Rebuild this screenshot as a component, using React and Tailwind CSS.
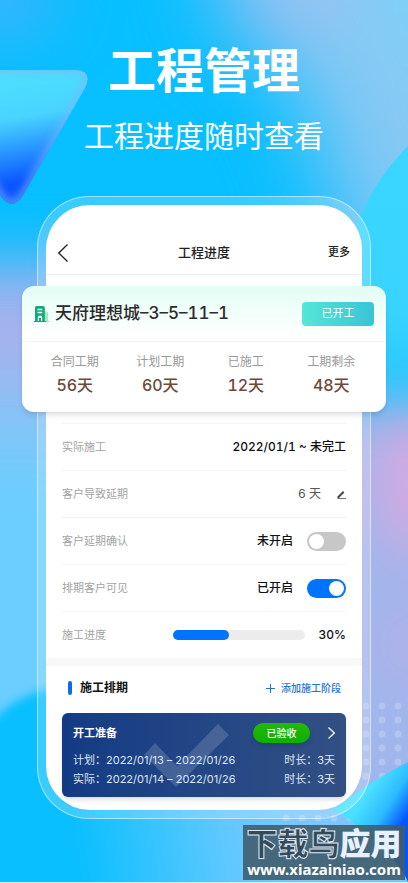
import { useState } from "react";

const stats = [
  { label: "合同工期", value: "56天" },
  { label: "计划工期", value: "60天" },
  { label: "已施工", value: "12天" },
  { label: "工期剩余", value: "48天" },
];

const stages = [
  {
    name: "开工准备",
    status: "已验收",
    dates: [
      { label: "计划：", range: "2022/01/13 – 2022/01/26", days: "时长：3天" },
      { label: "实际：", range: "2022/01/14 – 2022/01/26", days: "时长：3天" },
    ],
  },
];

// dot grid behind the phone, bottom right
const dots = [];
for (let row = 0; row < 9; row++) {
  for (let col = 0; col < 8; col++) {
    dots.push({ x: 286 + col * 16, y: 706 + row * 14 });
  }
}

function Background() {
  return (
    <svg
      className="absolute inset-0 h-full w-full"
      viewBox="0 0 408 883"
      preserveAspectRatio="xMidYMid slice"
      aria-hidden="true"
    >
      <defs>
        <filter id="blur40" x="-50%" y="-50%" width="200%" height="200%" colorInterpolationFilters="sRGB">
          <feGaussianBlur stdDeviation="42" />
        </filter>
        <filter id="blur30" x="-50%" y="-50%" width="200%" height="200%" colorInterpolationFilters="sRGB">
          <feGaussianBlur stdDeviation="30" />
        </filter>
        <filter id="blur3" x="-20%" y="-20%" width="140%" height="140%" colorInterpolationFilters="sRGB">
          <feGaussianBlur stdDeviation="4" />
        </filter>
        <linearGradient id="orb" x1="0" y1="0" x2="0" y2="1">
          <stop offset="0" stopColor="#3ad6ff" />
          <stop offset="0.6" stopColor="#38d4ff" />
          <stop offset="1" stopColor="#40d9ff" stopOpacity="0" />
        </linearGradient>
        <linearGradient id="tri" gradientUnits="userSpaceOnUse" x1="20" y1="70" x2="40" y2="185">
          <stop offset="0" stopColor="#4be2ff" />
          <stop offset="0.4" stopColor="#48d4ff" />
          <stop offset="0.7" stopColor="#2690ff" />
          <stop offset="0.95" stopColor="#0a55ff" />
        </linearGradient>
        <linearGradient id="ground" gradientUnits="userSpaceOnUse" x1="0" y1="850" x2="300" y2="800">
          <stop offset="0.25" stopColor="#0abfff" />
          <stop offset="0.75" stopColor="#62c8ff" />
          <stop offset="1" stopColor="#7cc6fa" />
        </linearGradient>
        <linearGradient id="leaf" gradientUnits="userSpaceOnUse" x1="372" y1="785" x2="418" y2="815">
          <stop offset="0" stopColor="#4ae0ff" />
          <stop offset="0.45" stopColor="#2cbcff" />
          <stop offset="0.85" stopColor="#0656ff" />
        </linearGradient>
        <clipPath id="triClip">
          <path d="M-60 70H76Q93 71 85 88L22 197Q12 211 1 197L-60 90Z" />
        </clipPath>
      </defs>
      <rect width="408" height="883" fill="#08bfff" />
      <g filter="url(#blur40)">
        <path d="M190 -120H540V300H370L310 120Z" fill="#88c8f4" />
        <circle cx="275" cy="-5" r="52" fill="#a6c0f1" />
        <rect x="395" y="-120" width="140" height="190" fill="#78d4fa" />
      </g>
      <g filter="url(#blur30)">
        <ellipse cx="0" cy="0" rx="60" ry="40" fill="#3bb4fb" />
        <rect x="-120" y="265" width="220" height="125" fill="#a4b2ee" />
        <rect x="-120" y="385" width="290" height="90" fill="#86c4f7" />
        <rect x="-120" y="455" width="290" height="310" fill="#6bceff" />
        <rect x="250" y="395" width="300" height="435" fill="#a0b6ec" />
        <ellipse cx="420" cy="480" rx="38" ry="75" fill="#e0a6de" />
        <ellipse cx="416" cy="645" rx="24" ry="24" fill="#d0a8e4" />
      </g>
      <path d="M408 146Q372 182 355 230L340 420H408Z" fill="url(#orb)" />
      <path d="M-20 736C10 695 60 670 110 705L300 790L428 830V903H-20Z" fill="url(#ground)" filter="url(#blur3)" />
      <g fill="#fff" fillOpacity="0.2">
        {dots.map((d) => (
          <circle key={`${d.x}-${d.y}`} cx={d.x} cy={d.y} r="3.5" />
        ))}
      </g>
      <path d="M333 809C350 797 375 779 408 762V882C400 860 362 826 333 809Z" fill="url(#leaf)" />
      <g clipPath="url(#triClip)">
        <rect x="-60" y="60" width="160" height="160" fill="url(#tri)" />
        <path
          d="M-60 70H76Q93 71 85 88L22 197Q12 211 1 197L-60 90"
          fill="none"
          stroke="#80b4fb"
          strokeWidth="5"
          filter="url(#blur3)"
        />
      </g>
      <rect y="882" width="408" height="1" fill="#c9f0ff" />
    </svg>
  );
}

function BuildingIcon() {
  return (
    <svg className="h-[18px] w-4 shrink-0" viewBox="0 0 16 18" aria-hidden="true">
      <path d="M10 5.500L14 7.500V16H15.500V17H10Z" fill="#a5e8c5" />
      <path d="M1 16V2.500Q1 1 2.500 1H9Q10.800 1 10.800 2.500V16H12V17H0V16Z" fill="#14a97b" />
      <path d="M3.500 4.500H8.300M3.500 7.500H8.300" stroke="#e6fff6" strokeWidth="1.300" />
      <path d="M3.800 16V12.500Q3.800 10.500 6 10.500Q8.200 10.500 8.200 12.500V16H7V13H5V16Z" fill="#e6fff6" />
    </svg>
  );
}

function Row({ label, children }) {
  return (
    <div className="flex h-[47px] items-center justify-between border-t border-[#f5f5f5]">
      <span className="text-[11px] text-[#a3a3a3]">{label}</span>
      <div className="flex items-center text-xs font-medium text-[#111]">{children}</div>
    </div>
  );
}

function SwitchRow({ label, checked, onChange }) {
  return (
    <Row label={label}>
      <span className="mr-[14px]">{checked ? "已开启" : "未开启"}</span>
      <input
        type="checkbox"
        role="switch"
        aria-label={label}
        checked={checked}
        onChange={(e) => onChange(e.target.checked)}
        className="flex h-[19px] w-[39px] appearance-none items-center rounded-full bg-[#c7c7c7] px-[2px] before:h-[15px] before:w-[15px] before:rounded-full before:bg-white checked:justify-end checked:bg-[#0074ff]"
      />
    </Row>
  );
}

function StageCard({ stage }) {
  return (
    <div className="relative h-[84px] rounded-md bg-linear-to-r from-[#133b85] to-[#325084] px-[11px] pt-[10px] text-white shadow-md">
      <svg className="absolute top-0 left-0 h-[84px] w-[170px]" viewBox="0 0 170 84" aria-hidden="true">
        <path d="M93 30L82 42L114 74L167 22L156 11L115 53Z" fill="#fff" fillOpacity="0.16" />
      </svg>
      <div className="relative flex h-5 items-center">
        <h3 className="text-[11px] font-bold">{stage.name}</h3>
        <span className="ml-auto flex h-5 w-[57px] items-center justify-center rounded-full bg-linear-to-b from-[#22b80c] to-[#0fae00] text-[10px] font-medium shadow-md">
          {stage.status}
        </span>
        <button type="button" aria-label="查看开工准备" className="ml-[18px]">
          <svg className="h-3 w-[7px]" viewBox="0 0 7 12" fill="none" stroke="#fff" strokeWidth="1.200">
            <path d="M0.500 0.500L6.300 6L0.500 11.500" />
          </svg>
        </button>
      </div>
      <div className="relative mt-2 text-[11px] leading-[19px] text-[#dfe6f3] normal-nums">
        {stage.dates.map((d) => (
          <div key={d.label} className="flex justify-between">
            <span>
              {d.label}
              {d.range}
            </span>
            <span>{d.days}</span>
          </div>
        ))}
      </div>
    </div>
  );
}

export default function App() {
  const [delayConfirm, setDelayConfirm] = useState(false);
  const [visible, setVisible] = useState(true);
  const progress = 43;

  return (
    <div className="relative overflow-hidden font-['Inter','Noto_Sans_CJK_SC',sans-serif] tabular-nums">
      <Background />

      <div className="relative px-[37px] pt-[38px] pb-16">
        <header className="text-center text-white">
          <h1 className="text-5xl leading-[66px] font-bold">工程管理</h1>
          <p className="mt-[10px] text-3xl leading-[44px] font-normal whitespace-nowrap">工程进度随时查看</p>
        </header>

        {/* phone */}
        <div className="mt-[38px] rounded-[52px] border border-white/50 bg-white/20 p-2">
          <main className="rounded-[44px] bg-white pt-[26px] pb-[13px]">
            <nav className="flex h-11 items-center justify-between border-b border-[#f0f0f0] px-3 text-[#222]">
              <button type="button" aria-label="返回" className="w-[22px]">
                <svg className="h-[18px] w-[10px]" viewBox="0 0 10 18" fill="none" stroke="#222" strokeWidth="1.300">
                  <path d="M9.500 0.500L0.800 9L9.500 17.500" />
                </svg>
              </button>
              <h2 className="text-[13px] font-medium">工程进度</h2>
              <button type="button" className="text-[11px] font-medium">
                更多
              </button>
            </nav>

            {/* project card, wider than the phone */}
            <section className="relative -mx-6 mt-[11px] mb-[11px] h-[126px] rounded-xl bg-white bg-linear-to-b from-[#e2fef4] to-white to-40% shadow-md">
              <div className="flex h-14 items-center border-b border-[#f1f5f4] px-3">
                <BuildingIcon />
                <h2 className="ml-[5px] text-[17px] font-medium text-[#2c2c2c]">天府理想城–3–5–11–1</h2>
                <span className="ml-auto flex h-6 w-[72px] items-center justify-center rounded bg-linear-to-r from-[#55e6d6] to-[#38c4d6] text-[11px] text-white">
                  已开工
                </span>
              </div>
              <dl className="grid grid-cols-4 pt-[10px] pr-3 pl-[10px] text-center">
                {stats.map((s) => (
                  <div key={s.label}>
                    <dt className="text-xs leading-5 text-[#999]">{s.label}</dt>
                    <dd className="mt-px text-base leading-6 font-medium text-[#70483a]">{s.value}</dd>
                  </div>
                ))}
              </dl>
            </section>

            <div className="px-4">
              <Row label="实际施工">2022/01/1 ~ 未完工</Row>
              <Row label="客户导致延期">
                <span className="font-normal text-[#555]">6 天</span>
                <button type="button" aria-label="编辑" className="ml-4">
                  <svg className="h-[9px] w-[9px]" viewBox="0 0 9 9" aria-hidden="true">
                    <path d="M0.500 8V6.500L6 1L7.400 2.400L1.900 8Z" fill="#444" />
                    <path d="M0.500 8.500H9" stroke="#555" strokeWidth="0.800" />
                  </svg>
                </button>
              </Row>
              <SwitchRow label="客户延期确认" checked={delayConfirm} onChange={setDelayConfirm} />
              <SwitchRow label="排期客户可见" checked={visible} onChange={setVisible} />
              <Row label="施工进度">
                <div
                  role="progressbar"
                  aria-label="施工进度"
                  aria-valuenow={30}
                  className="mr-[14px] h-[10px] w-[132px] rounded-full bg-[#ececec]"
                >
                  <div className="h-full rounded-full bg-[#0074ff]" style={{ width: `${progress}%` }} />
                </div>
                30%
              </Row>
            </div>

            <div className="h-2 bg-[#f8f8f8]" />

            <section className="px-4">
              <div className="flex h-[47px] items-center pr-[5px] pb-[3px] pl-[6px]">
                <span className="h-[14px] w-1 rounded-full bg-[#0a6cf0]" />
                <h2 className="ml-2 text-xs font-bold text-[#111]">施工排期</h2>
                <button type="button" className="ml-auto flex items-center gap-[6px] text-[10px] font-medium text-[#1f74d8]">
                  <svg className="h-[9px] w-[9px]" viewBox="0 0 9 9" stroke="#1f74d8" strokeWidth="1">
                    <path d="M4.500 0V9M0 4.500H9" />
                  </svg>
                  添加施工阶段
                </button>
              </div>
              {stages.map((stage) => (
                <StageCard key={stage.name} stage={stage} />
              ))}
            </section>
          </main>
        </div>
      </div>

      {/* watermark */}
      <div className="absolute right-[3px] bottom-[3px] h-[55px] w-[162px] bg-[#405d6e]/90 pt-1 text-center whitespace-nowrap">
        <p className="text-[31px] leading-[30px] font-black">
          <span className="text-[#34495a] [-webkit-text-stroke:1px_#dbe6f0]">下载鸟</span>
          <span className="text-[#e8f1ff]">应用</span>
        </p>
        <a
          href="#"
          className="block font-['Noto_Sans',sans-serif] text-[15px] leading-5 font-bold text-white"
        >
          www.xiazainiao.com
        </a>
      </div>
    </div>
  );
}
